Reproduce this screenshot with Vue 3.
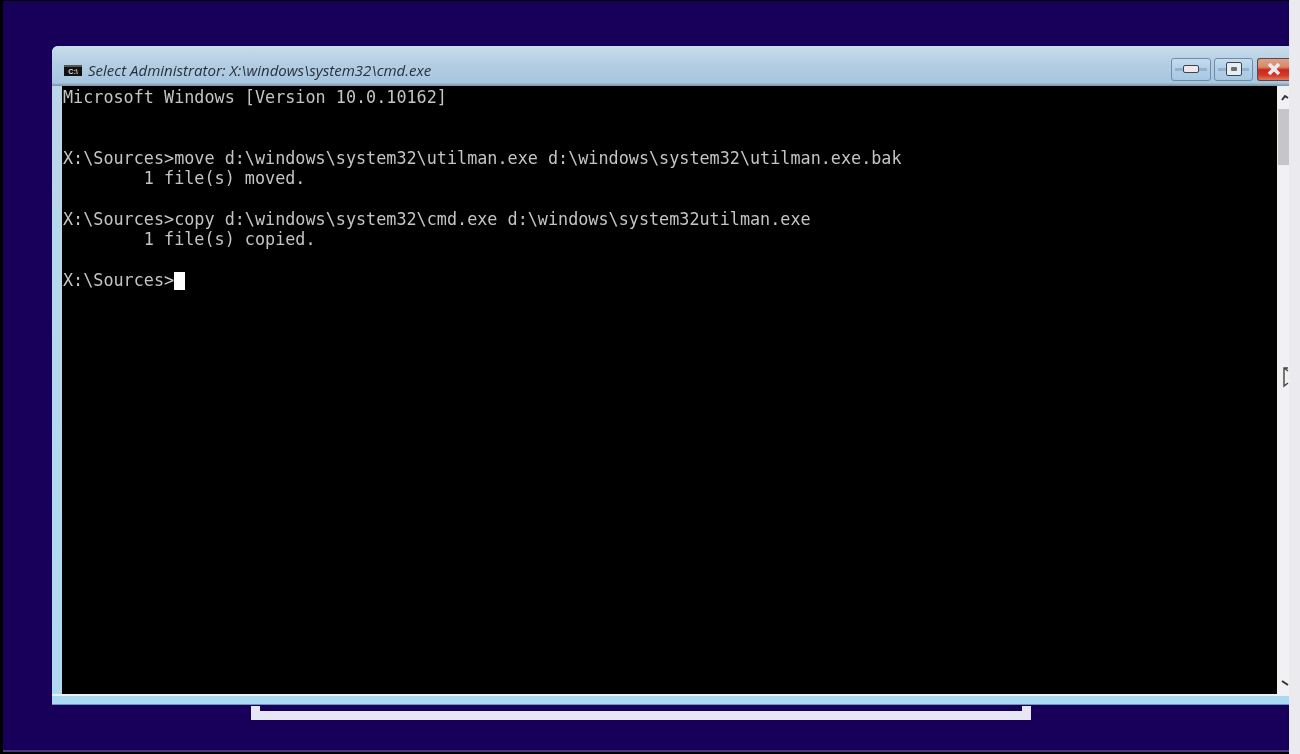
<script setup>
const lines = [
  'Microsoft Windows [Version 10.0.10162]',
  '',
  '',
  'X:\\Sources>move d:\\windows\\system32\\utilman.exe d:\\windows\\system32\\utilman.exe.bak',
  '        1 file(s) moved.',
  '',
  'X:\\Sources>copy d:\\windows\\system32\\cmd.exe d:\\windows\\system32utilman.exe',
  '        1 file(s) copied.',
  ''
]
</script>

<template>
  <div class="page">
    <div class="desktop">
      <div class="canvas">
        <section class="window">
          <header class="titlebar">
            <div class="app-icon"><span class="app-icon-text">C:\</span></div>
            <div class="title">Select Administrator: X:\windows\system32\cmd.exe</div>
            <div class="controls">
              <button class="ctl">
                <span class="glow"></span>
                <span class="min-glyph"></span>
              </button>
              <button class="ctl ctl-max">
                <span class="glow"></span>
                <span class="max-glyph"><span class="max-inner"></span></span>
              </button>
              <button class="ctl ctl-close">
                <svg class="x-glyph" viewBox="0 0 16 14" width="16" height="14">
                  <path d="M3 2 L13 12 M13 2 L3 12" stroke="#e9e9f0" stroke-width="3.6" fill="none" />
                </svg>
              </button>
            </div>
          </header>
          <div class="body">
            <div class="console">
              <div class="term">
                <div v-for="(line, i) in lines" :key="i" class="line">{{ line }}</div>
                <div class="line">X:\Sources&gt;<span class="caret"></span></div>
              </div>
            </div>
            <aside class="scrollbar">
              <div class="arrow-row">
                <svg width="8" height="7" viewBox="0 0 8 7"><path d="M1 6 L4 2 L7 4" stroke="#333" stroke-width="2" fill="none" /></svg>
              </div>
              <div class="thumb"></div>
              <div class="track"></div>
              <div class="arrow-row arrow-down">
                <svg width="8" height="7" viewBox="0 0 8 7"><path d="M1 2 L4 4 L7 6" stroke="#333" stroke-width="2" fill="none" /></svg>
              </div>
            </aside>
          </div>
          <div class="sill"></div>
        </section>
        <div class="bracket"></div>
        <svg class="pointer" width="8" height="22" viewBox="0 0 8 22">
          <path d="M6 2 L2 2 L2 20 L6 17 M2 2 L6 5" stroke="#444" stroke-width="1.4" fill="none" />
        </svg>
      </div>
      <div class="baseline"></div>
    </div>
    <div class="strip"></div>
  </div>
</template>

<style scoped>
.page {
  width: 1300px;
  height: 754px;
  display: flex;
  background: #000;
  overflow: hidden;
}
.desktop {
  width: 1289px;
  height: 754px;
  padding: 1px 0 0 3px;
  box-sizing: border-box;
  display: flex;
  flex-direction: column;
}
.canvas {
  position: relative;
  flex: 1;
  background: #18005a;
  padding: 45px 0 0 49px;
}
.baseline {
  height: 2px;
  background: #4a3b78;
  margin-bottom: 2px;
}
.strip {
  width: 11px;
  background: #ebebef;
}
.window {
  height: 659px;
  display: flex;
  flex-direction: column;
  border-radius: 6px 0 0 0;
  overflow: hidden;
  background: linear-gradient(180deg, #bcd5e8 0%, #b4d8ee 60%, #aedaf2 100%);
}
.titlebar {
  height: 40px;
  flex: none;
  display: flex;
  align-items: center;
  box-sizing: border-box;
  padding: 8px 0 0 12px;
  background: linear-gradient(180deg, #c9dcea 0%, #b3cee3 45%, #a7c6e0 92%, #7f8f9e 100%);
}
.app-icon {
  width: 18px;
  height: 11px;
  background: #111;
  border-top: 2px solid #555;
  box-sizing: border-box;
  display: flex;
  align-items: center;
  justify-content: center;
  overflow: hidden;
}
.app-icon-text {
  font: 700 7px/7px "Liberation Sans", sans-serif;
  color: #ddd;
}
.title {
  margin-left: 6px;
  font: italic 15.05px/18px "Open Sans", sans-serif;
  color: #2a3038;
  filter: blur(0.45px);
  white-space: nowrap;
}
.controls {
  margin-left: auto;
  display: flex;
  gap: 3px;
  margin-top: -2px;
}
.ctl {
  position: relative;
  width: 40px;
  height: 23px;
  padding: 0;
  border: 1px solid #6f8cab;
  border-radius: 3px;
  background: linear-gradient(180deg, #c4dcee 0%, #b2cfe6 50%, #a8c8e2 100%);
  display: flex;
  align-items: center;
  justify-content: center;
  filter: blur(0.4px);
}
.ctl-max {
  width: 39px;
}
.ctl-close {
  width: 32px;
  margin-left: 1px;
  border-right: none;
  border-color: #5a4a50;
  border-radius: 3px 0 0 3px;
  background: linear-gradient(180deg, #dca088 0%, #d88a68 38%, #c8281f 52%, #d23a2a 78%, #e07a58 100%);
}
.glow {
  position: absolute;
  left: 3px;
  right: 3px;
  top: 9px;
  height: 3px;
  background: #8fb3d1;
}
.min-glyph {
  position: relative;
  width: 14px;
  height: 6px;
  border: 1px solid #3c4452;
  border-radius: 2px;
  background: #efe7ea;
}
.max-glyph {
  position: relative;
  width: 14px;
  height: 12px;
  border: 1px solid #3c4452;
  border-radius: 2px;
  background: #e8edf2;
  display: flex;
  align-items: center;
  justify-content: center;
}
.max-inner {
  width: 6px;
  height: 4px;
  background: #6a7078;
  border-radius: 1px;
}
.x-glyph {
  display: block;
}
.body {
  flex: 1;
  min-height: 0;
  display: flex;
  padding-left: 10px;
}
.console {
  width: 1215px;
  background: #000;
  box-sizing: border-box;
  padding: 1px 0 0 1px;
}
.term {
  font: 16.8px/20.33px "DejaVu Sans Mono", monospace;
  color: #c4c4c4;
  filter: blur(0.45px);
}
.line {
  height: 20.33px;
  white-space: pre;
}
.caret {
  display: inline-block;
  width: 11px;
  height: 18px;
  background: #fff;
  vertical-align: -4px;
}
.scrollbar {
  width: 12px;
  background: #f1f1f3;
  display: flex;
  flex-direction: column;
  align-items: flex-end;
}
.arrow-row {
  height: 23px;
  flex: none;
  width: 100%;
  display: flex;
  align-items: center;
  justify-content: flex-end;
}
.arrow-down {
  height: 24px;
}
.thumb {
  width: 11px;
  height: 56px;
  background: #c6c6c8;
}
.track {
  flex: 1;
}
.sill {
  height: 2px;
  flex: none;
  background: #eef1f3;
}
.window::after {
  content: "";
  display: block;
  flex: none;
  height: 9px;
  background: linear-gradient(180deg, #a8d8f2 0%, #aedaf2 85%, #3f6f9a 100%);
}
.bracket {
  width: 762px;
  height: 5px;
  margin: 1px 0 0 199px;
  border: solid #e6e6f4;
  border-width: 0 9px 9px;
}
.pointer {
  position: absolute;
  left: 1279px;
  top: 365px;
  filter: blur(0.2px);
}
</style>
